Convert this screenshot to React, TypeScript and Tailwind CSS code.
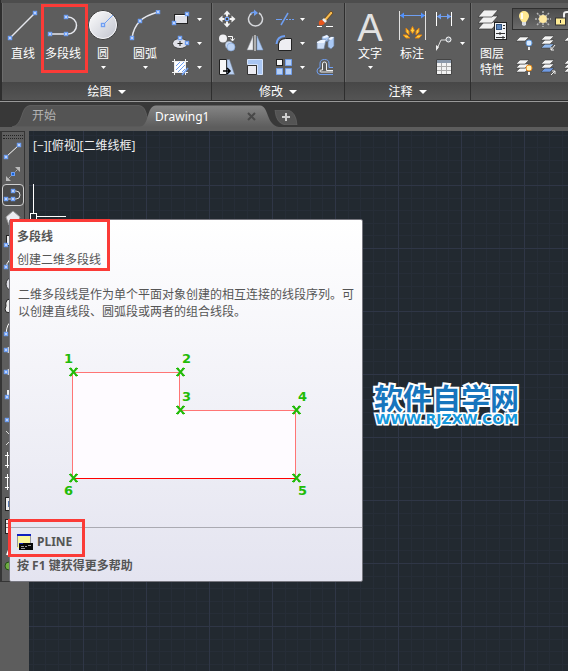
import type { ReactNode } from 'react';

const BLUE = '#6f9ff2';
const PALE = '#e6e8ee';

function Node({ x, y }: { x: number; y: number }) {
  return <rect x={x - 1.5} y={y - 1.5} width="3" height="3" fill="#e9f0ff" stroke={BLUE} strokeWidth="1.4" />;
}

function Caret({ big = false }: { big?: boolean }) {
  return (
    <svg width={big ? 8 : 5} height={big ? 4 : 3} viewBox="0 0 8 4" preserveAspectRatio="none" className="shrink-0" aria-hidden="true">
      <path d="M0 0h8L4 4z" fill="#fff" />
    </svg>
  );
}

function Panel({ title, className, children }: { title?: string; className: string; children: ReactNode }) {
  return (
    <section className={`flex flex-col border-l border-[#2e2e2e] bg-[#5d5d5d] ${className}`}>
      <div className="flex h-[79px] border-l border-[#6c6c6c]">{children}</div>
      <button className="flex h-[18px] items-center justify-center gap-1.5 bg-linear-to-b from-[#474747] to-[#545454] pt-0.5 text-xs leading-4 text-white">
        {title && (
          <>
            {title}
            <Caret big />
          </>
        )}
      </button>
    </section>
  );
}

function BigButton({ label, className, arrow = false, children }: { label: ReactNode; className: string; arrow?: boolean; children: ReactNode }) {
  return (
    <button className={`flex shrink-0 flex-col items-center pt-[7px] text-xs leading-4 text-white ${className}`}>
      {children}
      <span className="whitespace-nowrap">{label}</span>
      {arrow && (
        <span className="mt-1">
          <Caret />
        </span>
      )}
    </button>
  );
}

function BigIcon({ children }: { children: ReactNode }) {
  return (
    <svg width="36" height="36" viewBox="0 0 36 36" fill="none" className="shrink-0" aria-hidden="true">
      {children}
    </svg>
  );
}

function Tool({ name, children }: { name: string; children: ReactNode }) {
  return (
    <button aria-label={name} className="block h-6 w-6 shrink-0">
      <svg width="24" height="24" viewBox="0 0 24 24" fill="none" aria-hidden="true">
        {children}
      </svg>
    </button>
  );
}

function MoreArrow({ name }: { name: string }) {
  return (
    <button aria-label={`${name} 更多`} className="flex h-6 w-3 items-center justify-center">
      <Caret />
    </button>
  );
}

function Sheet({ x, y, fill = '#f4f4f4' }: { x: number; y: number; fill?: string }) {
  return <path d={`M${x + 4} ${y}h9l-4 4h-9z`} fill={fill} stroke="#333" strokeWidth=".5" />;
}

function DrawPanel() {
  return (
    <Panel title="绘图" className="w-[210px] shrink-0">
      <BigButton label="直线" className="w-10">
        <BigIcon>
          <path d="M5 28L30 3" stroke={PALE} strokeWidth="1.5" />
          <Node x={5} y={28} />
          <Node x={30} y={3} />
        </BigIcon>
      </BigButton>
      <BigButton label="多段线" className="w-10">
        <BigIcon>
          <path d="M5 24h18a8.5 8.5 0 0 0 0-17h-2" stroke={PALE} strokeWidth="1.5" />
          <Node x={5} y={24} />
          <Node x={21} y={24} />
          <Node x={21} y={7} />
        </BigIcon>
      </BigButton>
      <BigButton label="圆" arrow className="w-10">
        <BigIcon>
          <defs>
            <linearGradient id="disc" x1="0" y1="0" x2="1" y2="1">
              <stop offset="0" stopColor="#fff" />
              <stop offset="1" stopColor="#bfc2cd" />
            </linearGradient>
          </defs>
          <circle cx="18" cy="15" r="14.500" fill="url(#disc)" stroke="#383838" />
          <circle cx="18" cy="15" r="13.500" stroke="#f4f4f6" />
          <path d="M18 15L28 5" stroke={BLUE} />
          <Node x={18} y={15} />
        </BigIcon>
      </BigButton>
      <BigButton label="圆弧" arrow className="w-11">
        <BigIcon>
          <path d="M5 28C6 21 8 16 13 11S24 4 31 2" stroke={PALE} strokeWidth="1.5" />
          <Node x={5} y={28} />
          <Node x={13} y={11} />
          <Node x={31} y={2} />
        </BigIcon>
      </BigButton>
      <div className="ml-0.5 flex flex-col pt-1">
        <Tool name="矩形">
          <rect x="5.5" y="7.5" width="13" height="9" fill="#dfe0e7" stroke="#222" />
          <path d="M6.5 8.5h11" stroke="#fff" />
          <Node x={5} y={16} />
          <Node x={18} y={7} />
        </Tool>
        <Tool name="椭圆">
          <ellipse cx="11" cy="12.5" rx="7.5" ry="5" fill="#e0e1e8" stroke="#444" />
          <path d="M11 10v5M8.500 12.500h5" stroke="#222" />
          <Node x={11} y={7} />
          <Node x={18} y={12} />
        </Tool>
        <Tool name="图案填充">
          <rect x="6" y="7" width="11" height="10" fill="#fff" />
          <path d="M7 11l4-4M7 15l8-8M9 17l8-8M13 17l4-4" stroke={BLUE} />
          <path d="M3 6.500h16M3 17.500h16M5.500 4v16M16.500 4v16" stroke="#f0f0f0" />
          <path d="M13 20l6-7" stroke={BLUE} strokeWidth="1.5" />
        </Tool>
      </div>
      <div className="pt-1">
        <MoreArrow name="矩形" />
        <MoreArrow name="椭圆" />
        <MoreArrow name="图案填充" />
      </div>
    </Panel>
  );
}

function ModifyPanel() {
  return (
    <Panel title="修改" className="w-[133px] shrink-0">
      <div className="flex flex-col pl-0.5 pt-1">
        <Tool name="移动">
          <path d="M12 3.500l3.500 4H13v2h-2v-2H8.500zM12 20.500l3.500-4H13v-2h-2v2H8.500zM3.500 12l4-3.500V11h2v2h-2v2.500zM20.500 12l-4-3.500V11h-2v2h2v2.500z" fill="#f5f5f5" />
          <rect x="10.500" y="10.500" width="3" height="3" fill="#444" stroke={BLUE} />
        </Tool>
        <Tool name="复制">
          <circle cx="8" cy="7.500" r="4" fill="#f0f0f3" />
          <circle cx="14" cy="14" r="4" fill="#c7d7ef" stroke="#5d5d5d" strokeWidth=".5" />
          <circle cx="16" cy="16" r="4" fill="#bcd2f2" stroke="#789fd6" strokeWidth=".6" />
          <path d="M13 5.500h4.500v4M15.500 7.500l2 2.500 2-2.500" stroke="#fff" />
        </Tool>
        <Tool name="拉伸">
          <path d="M4.500 4.500h7v15h-7z" fill="#f7f7f7" stroke="#222" />
          <path d="M12 4.500h2.500l5 15H12z" fill="#b9d0f2" stroke="#6f7c91" strokeWidth=".5" />
          <path d="M8 16h6M12 13l3 3-3 3" stroke="#000" strokeWidth="1.5" />
        </Tool>
      </div>
      <div className="ml-1 flex flex-col pt-1">
        <Tool name="旋转">
          <path d="M9 6a7 7 0 1 0 7 0" stroke="#d6d8dc" strokeWidth="1.5" />
          <path d="M8 6.500C9 5 11 5 13 5.500" stroke={BLUE} strokeWidth="1.5" />
          <path d="M11 2.500l4 3.500-4 3z" fill={BLUE} />
        </Tool>
        <Tool name="镜像">
          <path d="M10 5v14H4z" fill="#eceef2" stroke="#8e939b" strokeWidth=".5" />
          <path d="M14 5v14h6z" fill="#b0cbf3" stroke="#7f9fca" strokeWidth=".5" />
          <path d="M12 4v16" stroke="#fff" />
        </Tool>
        <Tool name="缩放">
          <path d="M4.500 4.500h15v15h-5v-10h-10z" fill="#a9c6f3" stroke="#d6e4fb" />
          <path d="M4.500 10.500h9v9h-9z" fill="#ececf2" stroke="#333" />
        </Tool>
      </div>
      <div className="ml-[5px] flex flex-col pt-1">
        <Tool name="修剪">
          <path d="M4 12.500h6" stroke={BLUE} />
          <path d="M9 18l7-12" stroke={BLUE} strokeWidth="1.5" />
          <path d="M14 12.500h2m1 0h2m1 0h2" stroke={BLUE} />
        </Tool>
        <Tool name="圆角">
          <path d="M6.500 19.500V13q1-5 7-5.500h6v12z" fill="#eeeef2" stroke="#222" />
          <path d="M4.500 13Q5 5.500 13 5" stroke={BLUE} strokeWidth="2" />
        </Tool>
        <Tool name="阵列">
          <rect x="4.500" y="4.500" width="6" height="6" fill="#f6f6f6" stroke="#222" />
          <path d="M13.500 4.500h6v6h-6zM4.500 13.500h6v6h-6zM13.500 13.500h6v6h-6z" fill="#b7d0f5" stroke="#719eea" />
        </Tool>
      </div>
      <div className="pt-1">
        <MoreArrow name="修剪" />
        <MoreArrow name="圆角" />
        <MoreArrow name="阵列" />
      </div>
      <div className="ml-[5px] flex flex-col pt-1">
        <Tool name="删除">
          <path d="M18 4l2 2-7 8-2-2z" fill="#f7bc50" stroke="#57330e" strokeWidth=".7" />
          <path d="M11 11l3 3-2 2-3-3z" fill="#eee" />
          <path d="M9 13q-4 0-3 5 4 1 6-2z" fill="#e8561d" />
          <path d="M4 19.500h5M13 19.500h7" stroke="#fff" />
        </Tool>
        <Tool name="分解">
          <path d="M9 6l5-2 2 2v4l-5 1-2-2zM15 8l3-2h3v9l-3 3-3-2z" fill="#a9c8f4" stroke="#697d99" strokeWidth=".7" />
          <path d="M4 11l4-2h5l-2 9H4z" fill="#cbdcf5" stroke="#697d99" strokeWidth=".7" />
          <path d="M4 11l4-2h5l-2 3H4zM9 6l5-2 2 2-5 1zM15 8l3-2h3l-3 3z" fill="#eff5ff" />
        </Tool>
        <Tool name="偏移">
          <path d="M20 12.500h-4V8.500q0-4-4.500-4t-4.500 4v4q-3 .5-3 3.500t3 3.500h13" stroke={BLUE} />
          <path d="M20 15.500h-6.500V9q0-2-2-2t-2 2v6H8q-1 0-1 1t1 1h12" stroke="#f0f0f0" />
        </Tool>
      </div>
    </Panel>
  );
}

function AnnotatePanel() {
  return (
    <Panel title="注释" className="w-[126px] shrink-0">
      <BigButton label="文字" arrow className="w-12">
        <span aria-hidden="true" className="h-9 font-['Liberation_Sans',sans-serif] text-[38px] leading-9 text-[#e2e2e2]">A</span>
      </BigButton>
      <BigButton label="标注" className="w-9">
        <BigIcon>
          <path d="M5.500 1v29M31.500 1v29" stroke="#e2e2e2" />
          <path d="M6 5.500h25" stroke={BLUE} />
          <path d="M6 5.500l4-3v6zM31 5.500l-4-3v6z" fill="#4f91ff" />
          <g fill="#ffd044" stroke="#dc8112">
            <path d="M18.500 16.500l2 4-2 3-2-3zM12 18l3 3 0 4-3-3zM25 18l-3 3 0 4 3-3zM9 25l4 0 3 3-4 0zM28 25l-4 0-3 3 4 0z" />
          </g>
        </BigIcon>
      </BigButton>
      <div className="ml-0.5 flex flex-col pt-1">
        <Tool name="线性">
          <path d="M4.500 5v14M19.500 5v14" stroke="#fff" />
          <path d="M5 9.500h14" stroke={BLUE} />
          <path d="M5 9.500l4-3v6zM19 9.500l-4-3v6z" fill={BLUE} />
        </Tool>
        <Tool name="引线">
          <path d="M5 18l4-9h6" stroke="#ddd" />
          <path d="M4 20v-6l3 2z" fill="#eee" />
          <circle cx="16.500" cy="8.500" r="2.500" fill="#7c8289" stroke="#fff" />
        </Tool>
        <Tool name="表格">
          <path d="M4.500 4.500h15v15h-15z" fill="#f3f3f3" stroke="#444" />
          <path d="M5 5h14v3H5z" fill="#8a98aa" />
          <path d="M5 11.500h14M5 15.500h14M9.500 8v11M14.500 8v11" stroke="#aaa" />
        </Tool>
      </div>
      <div className="pt-1">
        <MoreArrow name="线性" />
        <MoreArrow name="引线" />
      </div>
    </Panel>
  );
}

function LayerPanel() {
  return (
    <Panel className="min-w-0 flex-1 overflow-hidden">
      <BigButton
        label={
          <>
            图层
            <br />
            特性
          </>
        }
        className="w-10"
      >
        <BigIcon>
          <g fill="#f1f1f1" stroke="#333" strokeWidth=".7">
            <path d="M10 12h14l-6 7H4z" />
            <path d="M10 6h14l-6 7H4z" />
            <path d="M10 0h14l-6 7H4z" />
          </g>
          <rect x="20.500" y="12.500" width="12" height="17" fill="#f1f3f6" stroke="#222" />
          <rect x="22.500" y="14.500" width="5" height="5" fill="#5c86bd" stroke="#31537f" />
          <path d="M29 15.500h2M29 18.500h2M22 23.500h9M22 27.500h9M26 22v3M29 26v3" stroke="#333" />
        </BigIcon>
      </BigButton>
      <div className="flex shrink-0 flex-col pt-[5px]">
        <div className="flex h-[22px] w-24 items-center border border-[#303030] bg-linear-to-b from-[#4c4c4c] to-[#6b6b6b]">
          <button aria-label="开/关图层" className="w-[22px]">
            <svg width="22" height="20" viewBox="0 0 22 20" aria-hidden="true">
              <path d="M11 2a5 5 0 0 0-5 5q0 2 3 6h4q3-4 3-6a5 5 0 0 0-5-5z" fill="#ffe992" />
              <path d="M9 4v6" stroke="#fffdf0" strokeWidth="2" />
              <path d="M9 13h4v3l-2 1-2-1z" fill="#d7dae0" />
            </svg>
          </button>
          <button aria-label="冻结图层" className="w-4">
            <svg width="16" height="16" viewBox="0 0 16 16" aria-hidden="true">
              <path d="M8 0v16M0 8h16M2 2l12 12M14 2L2 14" stroke="#b6b6b6" strokeWidth="1.5" strokeDasharray="2 1" />
              <circle cx="8" cy="8" r="4" fill="#ffe9a0" />
            </svg>
          </button>
          <button aria-label="锁定图层" className="ml-1 w-4">
            <svg width="18" height="16" viewBox="0 0 18 16" fill="none" aria-hidden="true">
              <path d="M9 7V3q0-2 3-2t3 2v2" stroke="#eee" strokeWidth="2" />
              <rect x=".5" y="7" width="10" height="7" fill="#ffec95" stroke="#333" />
              <path d="M5.500 9v3" stroke="#333" />
            </svg>
          </button>
        </div>
        <div className="mt-px flex">
          <Tool name="关闭">
            <Sheet x={4} y={6} />
            <circle cx="17" cy="12" r="3" fill="#d8eaff" stroke="#659cdd" />
            <path d="M16 16h2v3h-2z" fill="#e5e5e5" />
          </Tool>
          <Tool name="隔离">
            <Sheet x={5} y={13} fill="#91b8eb" />
            <Sheet x={5} y={9} />
            <Sheet x={5} y={5} />
            <path d="M19 14l-4 5M15 16v3h3" stroke="#eee" />
          </Tool>
          <Tool name="冻结">
            <Sheet x={4} y={6} />
          </Tool>
        </div>
        <div className="flex">
          <Tool name="打开所有图层">
            <Sheet x={4} y={13} />
            <Sheet x={4} y={9} />
            <Sheet x={4} y={5} />
            <circle cx="17" cy="13" r="3" fill="#fff2b7" stroke="#ef8c1b" />
            <path d="M16 17h2v3h-2z" fill="#eee" />
          </Tool>
          <Tool name="取消隔离">
            <Sheet x={5} y={13} fill="#709be4" />
            <Sheet x={5} y={9} />
            <Sheet x={5} y={5} />
            <path d="M15 20l4-4M16 16h3v3" stroke="#eee" />
          </Tool>
          <Tool name="解冻所有图层">
            <Sheet x={4} y={13} />
            <Sheet x={4} y={9} />
            <Sheet x={4} y={5} />
          </Tool>
        </div>
      </div>
    </Panel>
  );
}

function FileTabs() {
  return (
    <nav className="relative flex h-[25px] items-end bg-[#383838] pl-3 text-xs">
      <button className="relative h-[22px] w-[136px] shrink-0 pl-5 text-left text-[#b4b4b4]">
        <svg className="absolute inset-0" width="142" height="22" viewBox="0 0 142 22" aria-hidden="true">
          <path d="M0 22C12 20 8 1 18 .5h109C137 1 133 20 142 22z" fill="#545454" stroke="#666" strokeWidth=".7" />
        </svg>
        <span className="relative">开始</span>
      </button>
      <div className="relative -ml-2 flex h-[22px] w-[140px] shrink-0 items-center">
        <svg className="absolute inset-0" width="140" height="22" viewBox="0 0 140 22" aria-hidden="true">
          <defs>
            <linearGradient id="tab" x2="0" y2="1">
              <stop offset="0" stopColor="#858585" />
              <stop offset="1" stopColor="#5d5d5d" />
            </linearGradient>
          </defs>
          <path d="M0 22C10 20 6 1 16 .5h104C129 1 126 20 139 22z" fill="url(#tab)" />
        </svg>
        <button className="relative pl-[15px] pt-0.5 font-['Noto_Sans','Open_Sans',sans-serif] text-xs text-white">Drawing1</button>
        <button aria-label="关闭" className="absolute right-6 top-[7px]">
          <svg width="9" height="9" viewBox="0 0 9 9" aria-hidden="true">
            <path d="M1 1l7 7M8 1L1 8" stroke="#484848" strokeWidth="2" />
          </svg>
        </button>
      </div>
      <button aria-label="新图形" className="mb-0.5 ml-[-6px] shrink-0">
        <svg width="24" height="15" viewBox="0 0 24 15" aria-hidden="true">
          <path d="M1 0h13q8 2 9 15H12Q2 14 1 0z" fill="#545454" stroke="#656565" strokeWidth=".7" />
          <path d="M12 3v8M8 7h8" stroke="#ccc" strokeWidth="2" />
        </svg>
      </button>
    </nav>
  );
}

const sideTools: { name: string; icon: ReactNode }[] = [
  { name: '直线', icon: <><path d="M4 16L17 4" stroke="#fff" /><Node x={4} y={16} /><Node x={17} y={4} /></> },
  { name: '构造线', icon: <><path d="M5 17L17 5" stroke="#bbb" strokeDasharray="2 1" /><path d="M4 18v-5l5 5zM18 4v5l-5-5z" fill="#bbb" /><rect x="9.500" y="9.500" width="3" height="3" fill="#1b66d8" stroke={BLUE} /></> },
  { name: '多段线', icon: <><path d="M4 14h10a4 4 0 0 0 0-8h-3" stroke="#ddd" /><Node x={4} y={14} /><Node x={11} y={14} /><Node x={11} y={6} /></> },
  { name: '多边形', icon: <path d="M11 4l7 6-3 8H7l-3-8z" fill="#ececf1" stroke="#999" /> },
  { name: '矩形', icon: <><rect x="4.5" y="6.5" width="13" height="10" fill="#eee" stroke="#222" /><Node x={4} y={16} /></> },
  { name: '圆弧', icon: <><path d="M4 17Q5 7 16 5" stroke="#fff" /><Node x={4} y={16} /></> },
  { name: '圆', icon: <circle cx="11" cy="11" r="7" fill="#dedee5" stroke="#333" /> },
  { name: '修订云线', icon: <path d="M5 5q3-2 5 0 4-1 6 2v10q-5 3-12 0-2-3 0-6-1-3 1-6z" fill="#eee" stroke="#222" /> },
  { name: '样条曲线', icon: <><path d="M4 17q1-12 6-12 4 1 8 11" stroke="#fff" /><Node x={4} y={17} /></> },
  { name: '椭圆', icon: <><ellipse cx="11" cy="11" rx="7" ry="4" fill="#ddd" /><Node x={4} y={11} /></> },
  { name: '椭圆弧', icon: <><ellipse cx="11" cy="11" rx="7" ry="4" fill="#ddd" /><Node x={4} y={11} /></> },
  { name: '插入块', icon: <><rect x="5" y="7" width="10" height="7" fill="#eee" /><Node x={5} y={14} /></> },
  { name: '创建块', icon: <><rect x="7" y="5" width="9" height="11" fill="#eee" /><Node x={5} y={15} /></> },
  { name: '点', icon: <path d="M4 4l13 13M4 18L17 5" stroke="#ddd" /> },
  { name: '图案填充', icon: <><path d="M3 6.500h14M3 16.500h14M5.500 3v16" stroke="#fff" /><path d="M7 8h9v8H7z" fill="#86aef2" /></> },
  { name: '渐变色', icon: <><path d="M3 6.500h14M3 16.500h14M5.500 3v16" stroke="#fff" /><path d="M7 8h9v8H7z" fill="#4471bb" /></> },
  { name: '面域', icon: <><rect x="3.5" y="4.5" width="14" height="13" fill="#eee" stroke="#222" /><rect x="6" y="8" width="8" height="6" fill="#5779b2" /></> },
  { name: '表格', icon: <><rect x="3.5" y="4.5" width="14" height="14" fill="#eee" stroke="#222" /><path d="M4 8.500h14M4 12.500h14" stroke="#777" /></> },
  { name: '多行文字', icon: <path d="M5 18L11 3l6 15" stroke="#fff" strokeWidth="2" /> },
  { name: '添加选定对象', icon: <circle cx="7" cy="7" r="4" fill="#70ad43" stroke="#244f16" /> },
];

function SideBar() {
  return (
    <aside className="w-[29px] shrink-0 bg-[#5d5d5d]">
      <div className="w-[25px] border border-l-2 border-[#353535] pb-px">
        <div className="mx-px mb-px mt-[3px] h-1 border-y border-dotted border-[#222]" />
        {sideTools.map((t) => (
          <button
            key={t.name}
            aria-label={t.name}
            className={`flex h-[22px] w-full items-center justify-center ${t.name === '多段线' ? 'rounded-sm border border-[#d0d0d0] bg-[#4b4b4b]' : ''}`}
          >
            <svg width="22" height="20" viewBox="0 0 22 20" fill="none" className="shrink-0" aria-hidden="true">
              {t.icon}
            </svg>
          </button>
        ))}
      </div>
    </aside>
  );
}

function Canvas() {
  return (
    <main className="relative min-w-0 flex-1 overflow-hidden bg-[#222930]">
      <svg className="absolute inset-0 h-full w-full" fill="none" aria-hidden="true">
        <defs>
          <pattern id="grid" x="54" y="54" width="63" height="63" patternUnits="userSpaceOnUse">
            <path d="M13.500 0v63M25.500 0v63M38.500 0v63M50.500 0v63M0 13.500h63M0 25.500h63M0 38.500h63M0 50.500h63" stroke="#262d37" />
            <path d="M.500 0v63M0 .500h63" stroke="#2f3646" />
          </pattern>
        </defs>
        <rect width="100%" height="100%" fill="url(#grid)" />
        <path d="M4.500 53v29M8 85.500h29" stroke="#fff" />
        <rect x="1.500" y="82.500" width="6" height="6" stroke="#fff" />
      </svg>
      <p className="relative pl-1 pt-[7px] text-xs leading-4 text-[#f0f0f0]">[−][俯视][二维线框]</p>
      <div className="absolute left-[345px] top-[248px] text-center">
        <div className="whitespace-nowrap font-['Noto_Sans_CJK_SC',sans-serif] text-[29px] font-bold leading-9 text-[#1775bd] [-webkit-text-stroke:4px_white] [paint-order:stroke_fill]">软件自学网</div>
        <div className="-mt-1 font-['DejaVu_Sans',sans-serif] text-[14px] font-bold leading-4 text-[#1598dc] [-webkit-text-stroke:3px_white] [paint-order:stroke_fill]">WWW.RJZXW.COM</div>
      </div>
    </main>
  );
}

const vertices = [
  { n: 1, x: 63, y: 26, tx: 54, ty: 17 },
  { n: 2, x: 170, y: 26, tx: 172, ty: 17 },
  { n: 3, x: 170, y: 64, tx: 172, ty: 55 },
  { n: 4, x: 286, y: 64, tx: 288, ty: 55 },
  { n: 5, x: 286, y: 132, tx: 288, ty: 149 },
  { n: 6, x: 63, y: 132, tx: 54, ty: 149 },
];

function HelpTip() {
  return (
    <div role="tooltip" className="absolute left-[9px] top-[219px] w-[354px] rounded-xs border border-[#77777f] bg-linear-to-b from-white to-[#e4e4f0] text-xs text-[#555]">
      <h2 className="pl-[7px] pt-[7px] font-bold leading-5">多段线</h2>
      <p className="mt-[3px] pl-[7px] leading-5">创建二维多段线</p>
      <p className="mt-4 pl-2 pr-1.5 leading-[17px]">二维多段线是作为单个平面对象创建的相互连接的线段序列。可以创建直线段、圆弧段或两者的组合线段。</p>
      <svg className="mt-[26px] block" width="352" height="156" viewBox="0 0 352 156" fill="none" role="img" aria-label="多段线示例">
        <path d="M63 26h107v38h116v68H63z" fill="#fefbff" />
        <path d="M62.500 132V26.500h107v38h116V132" stroke="#ff7575" />
        <path d="M63 132.500h223" stroke="#f00" />
        {vertices.map((v) => (
          <g key={v.n}>
            <path d={`M${v.x - 3} ${v.y - 4}l7 8m0-8l-7 8`} stroke="#22bb08" strokeWidth="2" />
            <path d={`M${v.x - 4} ${v.y - 3.5}h3m3 0h3m-9 7h3m3 0h3`} stroke="#22bb08" />
            <text x={v.tx} y={v.ty} fill="#22bb08" className="font-['DejaVu_Sans',sans-serif] text-[13px] font-bold">{v.n}</text>
          </g>
        ))}
      </svg>
      <div className="mt-[25px] flex h-7 items-center gap-1 border-t border-[#aaaab2] pl-[7px] font-['Noto_Sans','Open_Sans',sans-serif] font-bold">
        <svg width="16" height="16" viewBox="0 0 16 16" aria-hidden="true">
          <path d="M0 0h14v14H0z" fill="#faf79a" />
          <path d="M0 1h14" stroke="#1020c0" strokeWidth="2" />
          <path d="M.5 2v11M13.5 2v8" stroke="#999" />
          <path d="M2 9h14v7H2z" fill="#080808" />
          <path d="M4 12.500h3m1 0h2m1-1h3M4 14.500h4" stroke="#999" />
          <path d="M2 9.500h4" stroke="#1020c0" />
        </svg>
        PLINE
      </div>
      <p className="mb-1 pl-[7px] font-['Noto_Sans','Noto_Sans_CJK_SC',sans-serif] font-bold leading-[22px]">按 F1 键获得更多帮助</p>
    </div>
  );
}

export default function App() {
  return (
    <div className="relative flex min-h-screen flex-col overflow-hidden bg-[#5d5d5d] font-['Open_Sans','Noto_Sans_CJK_SC',sans-serif]">
      <header className="flex border-b border-[#999] bg-[#2e2e2e] pl-px">
        <div className="flex min-w-0 flex-1 border-b border-t-3 border-b-[#2e2e2e] border-t-[#4d4d4d]">
          <DrawPanel />
          <ModifyPanel />
          <AnnotatePanel />
          <LayerPanel />
        </div>
      </header>
      <FileTabs />
      <div className="h-1 bg-[#5d5d5d]" />
      <div className="flex flex-1">
        <SideBar />
        <Canvas />
      </div>
      <HelpTip />
      {/* highlight frames */}
      <div className="pointer-events-none absolute left-[41px] top-1 h-[69px] w-[47px] border-3 border-[#fb3b37]" />
      <div className="pointer-events-none absolute left-[10px] top-[219px] h-[52px] w-[100px] border-3 border-[#fb3b37]" />
      <div className="pointer-events-none absolute left-2 top-[519px] h-[38px] w-[77px] border-3 border-[#fb3b37]" />
    </div>
  );
}
